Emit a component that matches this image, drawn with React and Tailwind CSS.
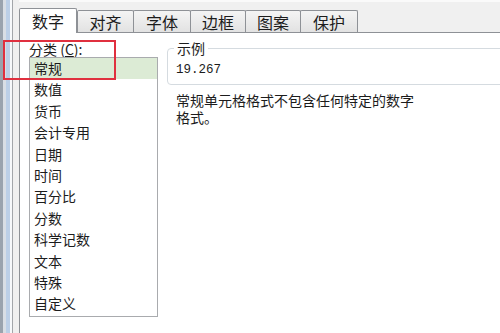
import React from 'react';

const cjk = { fontFamily: '"Noto Sans CJK SC", "Noto Sans", sans-serif' };

const tabs = [
  { label: '数字', w: 'w-[58px]' },
  { label: '对齐', w: 'w-[57px]' },
  { label: '字体', w: 'w-[58px]' },
  { label: '边框', w: 'w-[56px]' },
  { label: '图案', w: 'w-[56px]' },
  { label: '保护', w: 'w-[58px]' },
];

const categories = [
  '常规',
  '数值',
  '货币',
  '会计专用',
  '日期',
  '时间',
  '百分比',
  '分数',
  '科学记数',
  '文本',
  '特殊',
  '自定义',
];

function Tab({ label, w, active, first }) {
  if (active) {
    return (
      <div
        className={`${w} h-[25px] -mb-px z-10 flex items-center justify-center bg-white border border-b-0 border-[#8e9196] rounded-t-[2px] text-[16px] text-[#1c1c1c]`}
      >
        {label}
      </div>
    );
  }
  return (
    <div
      className={`${w} h-[22px] ${first ? '' : '-ml-px'} flex items-center justify-center bg-gradient-to-b from-[#f4f4f4] to-[#e2e2e2] border border-b-0 border-[#8e9196] rounded-t-[2px] text-[16px] text-[#1c1c1c]`}
    >
      {label}
    </div>
  );
}

export default function App() {
  return (
    <div className="relative w-[500px] h-[333px] overflow-hidden bg-[#f0f0f0] flex" style={cjk}>
      {/* window frame */}
      <div className="flex h-full">
        <div className="w-[3px] bg-[#9aa3ad]" />
        <div className="w-[3px] bg-[#d9dee4]" />
        <div className="w-[4px] bg-[#bccfe6]" />
        <div className="w-[2px] bg-[#f7f9fb]" />
        <div className="w-px bg-[#a3a6aa]" />
        <div className="w-[6px] bg-[#f0f0f0]" />
      </div>

      <div className="flex-1 flex flex-col">
        {/* tabs */}
        <div className="h-[32px] flex items-end bg-[#f0f0f0] border-t-2 border-[#fafafa]">
          <Tab {...tabs[0]} active />
          {tabs.slice(1).map((t, i) => (
            <Tab key={t.label} {...t} first={i === 0} />
          ))}
        </div>

        {/* pane */}
        <div className="flex-1 bg-white border-l border-t border-[#8e9196] flex pt-[8px]">
          {/* category list */}
          <div className="w-[147px] pl-[9px] flex flex-col">
            <div className="text-[14px] leading-[16px] text-[#1c1c1c] h-[16px]">
              分类 (<span className="underline">C</span>):
            </div>
            <div className="mt-[0px] w-[129px] h-[260px] border border-[#a9abae] bg-white">
              {categories.map((c, i) => (
                <div
                  key={c}
                  className={`h-[21.4px] leading-[21.4px] pl-[4px] text-[14px] text-[#1c1c1c] ${
                    i === 0 ? 'bg-[#dcebd5]' : ''
                  }`}
                >
                  {c}
                </div>
              ))}
            </div>
          </div>

          {/* sample + description */}
          <div className="flex-1 flex flex-col pt-[7px]">
            <div className="relative -mr-[10px] h-[37px] border border-[#d5dbe0] rounded-[4px] pl-[8px] pt-[13px]">
              <span className="absolute left-[6px] -top-[10px] px-[3px] bg-white text-[14px] leading-[18px] text-[#1c1c1c]">
                示例
              </span>
              <div
                className="text-[12.5px] leading-[16px] text-[#1c1c1c]"
                style={{ fontFamily: '"Liberation Mono", monospace' }}
              >
                19.267
              </div>
            </div>
            <p className="mt-[7px] ml-[9px] w-[242px] text-[14px] leading-[17px] text-[#1c1c1c]">
              常规单元格格式不包含任何特定的数字格式。
            </p>
          </div>
        </div>
      </div>

      {/* red annotation box */}
      <div className="absolute left-[3px] top-[40px] w-[113px] h-[40px] border-2 border-[#e0303f]" />
    </div>
  );
}
